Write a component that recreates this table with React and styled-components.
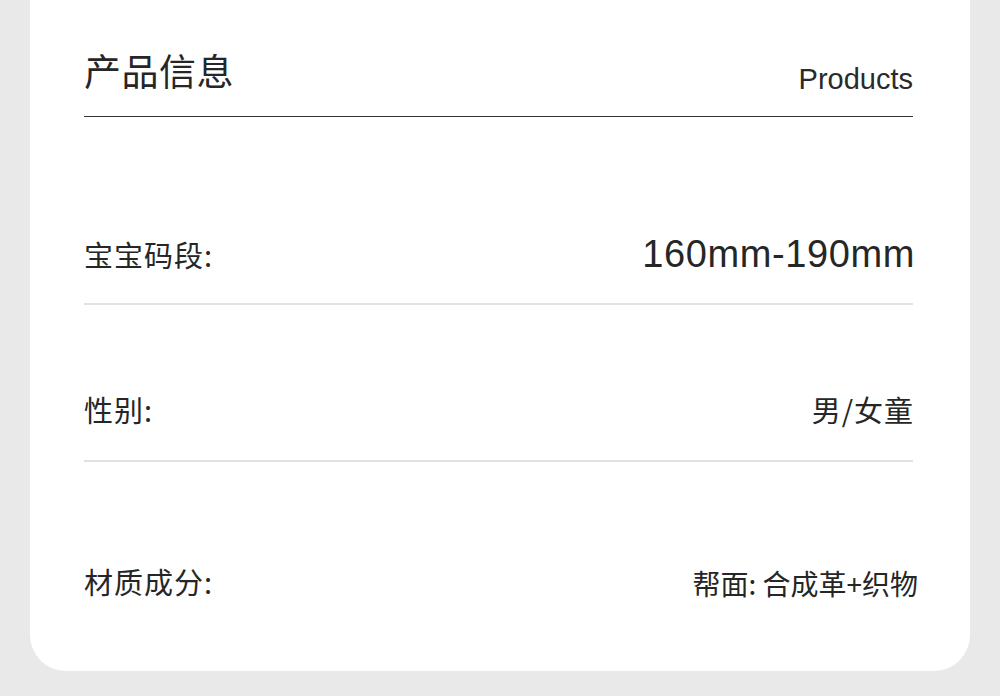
import React from "react";
import styled, { createGlobalStyle } from "styled-components";

const GlobalStyle = createGlobalStyle`
  body {
    margin: 0;
    background: #e9e9e9;
    font-family: "Liberation Sans", "Noto Sans CJK SC", sans-serif;
    color: #262626;
  }
`;

const Page = styled.div`
  width: 1000px;
  height: 696px;
  overflow: hidden;
`;

const Card = styled.div`
  margin: 0 30px;
  height: 671px;
  box-sizing: border-box;
  padding: 0 57px 0 54px;
  background: #fff;
  border-radius: 0 0 36px 36px;
`;

const Header = styled.div`
  display: flex;
  justify-content: space-between;
  align-items: flex-end;
  height: 117px;
  box-sizing: border-box;
  padding-bottom: 27px;
  border-bottom: 1.5px solid #333;
`;

const Title = styled.h1`
  margin: 0;
  font-family: "Noto Sans CJK SC", sans-serif;
  font-size: 37px;
  font-weight: 400;
  line-height: 1;
  letter-spacing: 0.5px;
`;

const Subtitle = styled.span`
  font-size: 29px;
  line-height: 1;
  margin-bottom: -5px;
  color: #2a2a2a;
`;

const Row = styled.div`
  display: flex;
  justify-content: space-between;
  align-items: center;
  padding: ${({ $top }) => $top}px 0 ${({ $bottom }) => $bottom}px;
  border-bottom: ${({ $last }) => ($last ? "none" : "2px solid #e2e2e2")};
`;

const Label = styled.span`
  font-family: "Noto Sans CJK SC", sans-serif;
  font-size: 29px;
  line-height: 30px;
  letter-spacing: 1px;
`;

const Value = styled.span`
  font-family: ${({ $latin }) =>
    $latin ? `"Liberation Sans", sans-serif` : `"Noto Sans CJK SC", sans-serif`};
  font-size: ${({ $size }) => $size}px;
  line-height: 30px;
  letter-spacing: ${({ $spacing }) => $spacing || 0}px;
  margin-right: ${({ $shift }) => $shift || 0}px;
  margin-top: ${({ $drop }) => $drop || 0}px;
`;

const rows = [
  { label: "宝宝码段:", value: "160mm-190mm", latin: true, size: 38, spacing: 0.6, top: 122, bottom: 34, shift: -2 },
  { label: "性别:", value: "男/女童", size: 29, spacing: 1, top: 89, bottom: 36, shift: -1 },
  { label: "材质成分:", value: "帮面: 合成革+织物", size: 28, spacing: 0, top: 102, bottom: 0, shift: -5, drop: 4, last: true },
];

export default function App() {
  return (
    <Page>
      <GlobalStyle />
      <Card>
        <Header>
          <Title>产品信息</Title>
          <Subtitle>Products</Subtitle>
        </Header>
        {rows.map((r) => (
          <Row key={r.label} $top={r.top} $bottom={r.bottom} $last={r.last}>
            <Label>{r.label}</Label>
            <Value
              $latin={r.latin}
              $size={r.size}
              $spacing={r.spacing}
              $shift={r.shift}
              $drop={r.drop}
            >
              {r.value}
            </Value>
          </Row>
        ))}
      </Card>
    </Page>
  );
}
